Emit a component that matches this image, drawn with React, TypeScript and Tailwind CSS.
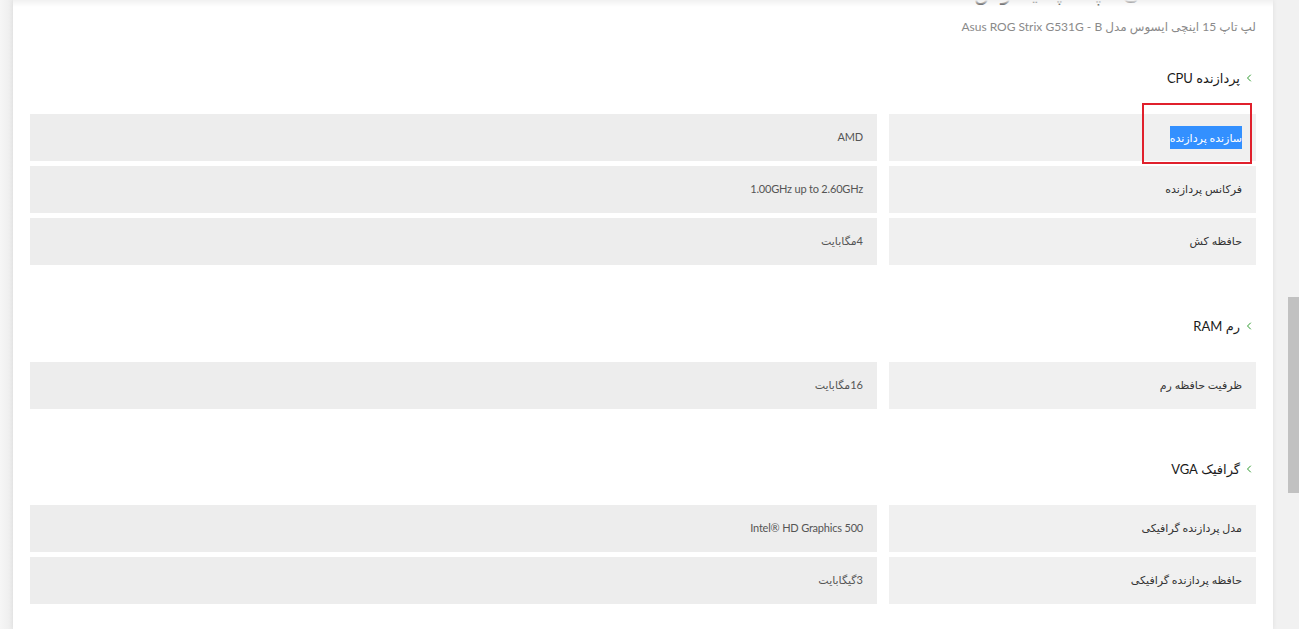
import React from "react";
import { ChevronLeft } from "lucide-react";

type Row = { k: React.ReactNode; v: string; annotate?: boolean };

function Section({ title, rows, className }: { title: string; rows: Row[]; className?: string }) {
  return (
    <section className={className}>
      <div className="flex h-[20px] items-center gap-[3px] pr-[1px] mb-[26px]">
        <ChevronLeft size={12} strokeWidth={2} className="text-[#2e9a2e]" />
        <h3 className="text-[13px] leading-[20px] text-[#1a1a1a]">{title}</h3>
      </div>
      <div className="grid grid-cols-[367px_1fr] gap-x-[12px] gap-y-[5px]">
        {rows.map((r, i) => (
          <React.Fragment key={i}>
            <div className="relative flex h-[47px] items-center bg-[#f0f0f0] pr-[14px] text-[11px] text-[#333]">
              {r.k}
              {r.annotate && (
                <div className="pointer-events-none absolute right-[4px] top-[-11px] h-[61px] w-[110px] border-2 border-[#e0202c]" />
              )}
            </div>
            <div className="flex h-[47px] items-center bg-[#ededed] pr-[14px] text-[11px] tracking-[-0.2px] text-[#555]">
              {r.v}
            </div>
          </React.Fragment>
        ))}
      </div>
    </section>
  );
}

export default function App() {
  return (
    <div
      className="flex h-[629px] w-[1299px] overflow-hidden bg-[#f3f3f3]"
      style={{ fontFamily: '"Lato", "DejaVu Sans", sans-serif' }}
    >
      <div className="w-[13px] shrink-0 bg-gradient-to-r from-[#f6f6f6] to-[#ececec]" />
      <main
        dir="rtl"
        className="relative w-[1260px] shrink-0 overflow-hidden bg-white px-[17px] shadow-[0_0_5px_rgba(0,0,0,0.08)]"
      >
        <div className="pointer-events-none absolute inset-x-0 top-0 h-[7px] bg-gradient-to-b from-[#f1f1f1] to-transparent" />
        <h1 className="-mt-[22px] text-[22px] leading-[28px] text-[#333]">مشخصات فنی لپ تاپ ایسوس ROG</h1>
        <p className="mt-[11px] text-[12px] leading-[20px] text-[#8a8a8a]">
          لپ تاپ 15 اینچی ایسوس مدل Asus ROG Strix G531G - B
        </p>

        <Section
          className="mt-[31px]"
          title="پردازنده CPU"
          rows={[
            {
              k: <span className="bg-[#3390ff] leading-[23px] text-white">سازنده پردازنده</span>,
              v: "AMD",
              annotate: true,
            },
            { k: "فرکانس پردازنده", v: "1.00GHz up to 2.60GHz" },
            { k: "حافظه کش", v: "4مگابایت" },
          ]}
        />
        <Section
          className="mt-[51px]"
          title="رم RAM"
          rows={[{ k: "ظرفیت حافظه رم", v: "16مگابایت" }]}
        />
        <Section
          className="mt-[50px]"
          title="گرافیک VGA"
          rows={[
            { k: "مدل پردازنده گرافیکی", v: "Intel® HD Graphics 500" },
            { k: "حافظه پردازنده گرافیکی", v: "3گیگابایت" },
          ]}
        />
      </main>
      <div className="flex w-[26px] shrink-0 justify-end bg-[#f1f1f1]">
        <div className="mt-[297px] h-[196px] w-[11px] bg-[#c1c1c1]" />
      </div>
    </div>
  );
}
